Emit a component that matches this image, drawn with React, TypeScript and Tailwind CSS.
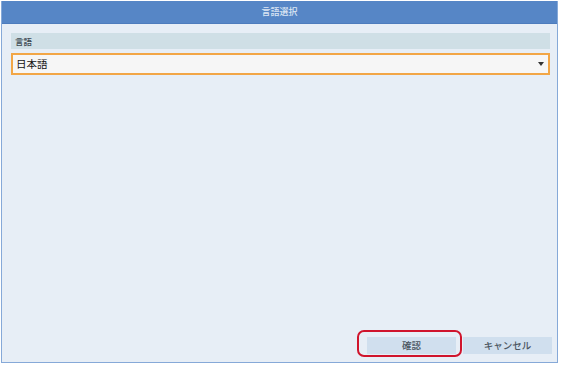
import React from "react";

export default function App() {
  const font = { fontFamily: '"Noto Sans CJK JP", "Noto Sans", sans-serif' };
  return (
    <div className="w-[561px] h-[365px] bg-white" style={font}>
      <div className="ml-[1px] pt-[1px] w-[558px] h-[364px]">
        <div className="flex flex-col w-[557px] h-[362px] border-x border-b border-[#86a9d8]">
          <div className="h-[23px] bg-[#5686c6] flex items-center justify-center text-[9px] font-medium text-[#dde7f4] border-b border-[#4d7cbd]">
            言語選択
          </div>
          <div className="flex-1 bg-[#e7eef6] pl-[9px] pr-[7px] pt-[9px] pb-[8px] flex flex-col">
            <div className="h-[16px] bg-[#cfdfe6] flex items-center pl-[4px] text-[8.5px] font-medium text-[#3d4a52]">
              言語
            </div>
            <div className="mt-[4px] h-[22px] bg-[#f6f6f6] border-2 border-[#f2a646] flex items-center justify-between pl-[3px] pr-[4px] text-[10.5px] text-[#111]">
              <span>日本語</span>
              <svg width="6" height="4" viewBox="0 0 6 4">
                <path d="M0 0 L6 0 L3 4 Z" fill="#333" />
              </svg>
            </div>
            <div className="flex-1" />
            <div className="flex justify-end gap-[7px]">
              <div className="relative">
                <div className="w-[89px] h-[17px] bg-[#d0dfee] flex items-center justify-center text-[9.5px] font-medium text-[#4a5560]">
                  確認
                </div>
                <div className="absolute left-[-10px] top-[-7px] w-[105px] h-[27px] border-2 border-[#d0142c] rounded-[7px]" />
              </div>
              <div className="w-[89px] h-[17px] bg-[#d0dfee] flex items-center justify-center text-[9.5px] font-medium text-[#4a5560] mr-[-2px]">
                キャンセル
              </div>
            </div>
          </div>
        </div>
      </div>
    </div>
  );
}
